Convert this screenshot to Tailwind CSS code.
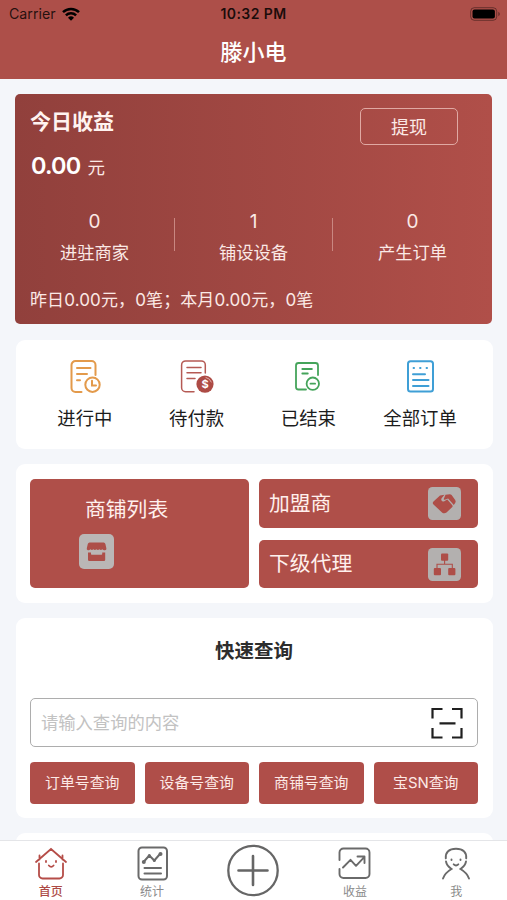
<!DOCTYPE html>
<html lang="zh-CN">
<head>
  <meta charset="UTF-8" />
  <meta name="viewport" content="width=device-width, initial-scale=1.0"/>
  <title>滕小电</title>
  <script src="https://cdn.jsdelivr.net/npm/@tailwindcss/browser@4"></script>
</head>
<body class="bg-[#f4f6fa] font-['Inter','Noto_Sans_CJK_SC',sans-serif] h-[900px] flex flex-col overflow-hidden">

  <!-- Header -->
  <header class="bg-[#ad4f49] h-[79px] shrink-0">
    <div class="h-7 pl-[9px] pr-[6px] grid grid-cols-3 items-center text-black">
      <div class="flex items-center gap-[6px]">
        <span class="text-[14.2px] leading-7 text-black/80">Carrier</span>
        <svg class="w-[18px] h-[14px]" viewBox="0 0 18 14" fill="none" stroke="#000" stroke-width="2.5">
          <path d="M1 5.2a11.5 11.5 0 0 1 16 0M3.9 8.3a7.3 7.3 0 0 1 10.2 0" />
          <path d="M9 13.7L6 10.7a4.3 4.3 0 0 1 6 0z" fill="#000" stroke="none" />
        </svg>
      </div>
      <span class="-ml-[3px] text-center text-[14px] font-semibold leading-7 tracking-[0.4px] whitespace-nowrap text-black/85">10:32 PM</span>
      <svg class="w-[31px] h-[14px] justify-self-end" viewBox="0 0 31 14">
        <rect x="0.7" y="0.7" width="26" height="12.6" rx="3.6" fill="none" stroke="#000" stroke-opacity=".4" />
        <rect x="2.5" y="2.5" width="22.4" height="9" rx="2" fill="#000" />
        <path d="M28.3 4.8v4.4q1.6-.7 1.6-2.2t-1.6-2.2z" fill="#000" fill-opacity=".4" />
      </svg>
    </div>
    <h1 class="text-center text-white text-[22px] font-medium leading-[48px]">滕小电</h1>
  </header>

  <main class="flex-1 min-h-0 overflow-hidden px-[15px] pt-[15px]">

    <!-- Income card -->
    <section class="h-[230px] w-[477px] rounded-[5px] bg-linear-to-r from-[#91403c] to-[#b04f49] px-[15px] text-[#fbe9e6] flex flex-col">
      <div class="flex justify-between h-[52px]">
        <h2 class="text-[21px] font-bold text-[#fff3f0] leading-[56px]">今日收益</h2>
        <button class="mt-[14px] mr-[19px] w-[98px] h-[37px] rounded-[5px] border border-[#e0a9a3] text-[18px] leading-[37px]">提现</button>
      </div>
      <p class="h-[56px] flex items-baseline gap-[7px] leading-[40px] pl-px"><span class="text-[23.5px] font-semibold text-white tracking-[-0.8px]">0.00</span><span class="text-[17.5px]">元</span></p>
      <div class="-mx-[15px] h-[64px] grid grid-cols-3 text-center mt-[3px]">
        <div class="flex flex-col">
          <span class="text-[19px] leading-[33px]">0</span>
          <span class="text-[17.3px] leading-[30px]">进驻商家</span>
        </div>
        <div class="flex flex-col relative">
          <i class="absolute left-0 top-[13px] h-[33px] w-px bg-[#c98781]"></i>
          <span class="text-[19px] leading-[33px]">1</span>
          <span class="text-[17.3px] leading-[30px]">铺设设备</span>
          <i class="absolute right-0 top-[13px] h-[33px] w-px bg-[#c98781]"></i>
        </div>
        <div class="flex flex-col">
          <span class="text-[19px] leading-[33px]">0</span>
          <span class="text-[17.3px] leading-[30px]">产生订单</span>
        </div>
      </div>
      <p class="mt-[16px] text-[17px] tracking-[0.12px] leading-[30px] whitespace-nowrap">昨日0.00元，0笔；本月0.00元，0笔</p>
    </section>

    <!-- Orders -->
    <section class="mt-[16px] ml-px w-[477px] h-[109px] rounded-[9px] bg-white grid grid-cols-4 pl-[13px] pr-[17px] text-[18.4px] text-[#1c1c1c] text-center">
      <div class="flex flex-col items-center pt-[18px]">
        <svg class="w-9 h-9" viewBox="0 0 36 36" fill="none" stroke="#e39a4b" stroke-width="2" stroke-linecap="round">
          <path d="M14.5 34H8.5a4 4 0 0 1-4-4V7a4 4 0 0 1 4-4h16a4 4 0 0 1 4 4v10M10 10h13.5M10 16h10M10 22.3h3" />
          <circle cx="25.5" cy="26.7" r="7.2" />
          <path d="M25 22.8v4.6h4" />
        </svg>
        <span class="leading-[48px]">进行中</span>
      </div>
      <div class="flex flex-col items-center pt-[18px]">
        <svg class="w-9 h-9" viewBox="0 0 36 36" fill="none" stroke="#b55a54" stroke-width="1.5" stroke-linecap="round">
          <path d="M15 33.7H6.6a4 4 0 0 1-4-4V6.9a4 4 0 0 1 4-4h15.7a4 4 0 0 1 4 4V15M8 9.5h14M8 14.8h14M8 20.5h8" />
          <circle cx="26" cy="26.1" r="8.6" fill="#ad4b45" stroke="none" />
          <path d="M27 19.5q4 .8 5.3 4.5" stroke="#e0aaa6" stroke-width="1" />
          <text x="26" y="30.2" text-anchor="middle" fill="#fff" stroke="none" font-size="11" font-weight="700">$</text>
        </svg>
        <span class="leading-[48px]">待付款</span>
      </div>
      <div class="flex flex-col items-center pt-[18px]">
        <svg class="w-9 h-9" viewBox="0 0 36 36" fill="none" stroke="#45a45b" stroke-width="1.8" stroke-linecap="round">
          <path d="M16 31.5H8.5A2.5 2.5 0 0 1 6 29V7.500A2.500 2.500 0 0 1 8.500 5h17A2.500 2.500 0 0 1 28 7.500V17M12.300 11h9.600M12.300 15.500h5.500" />
          <circle cx="22.8" cy="25.7" r="6.2" />
          <path d="M20.5 25.7h4.6" />
        </svg>
        <span class="leading-[48px]">已结束</span>
      </div>
      <div class="flex flex-col items-center pt-[18px]">
        <svg class="w-9 h-9" viewBox="0 0 36 36" fill="none" stroke="#3f9fd6" stroke-width="2" stroke-linecap="round">
          <rect x="6" y="3.2" width="25" height="30.3" rx="2.5" />
          <path d="M11 16.2h12M11 22h15.500M11 28h15.500" />
          <path d="M11.500 10h.6M18 10h.6M24.500 10h.6" stroke-width="1.800" />
        </svg>
        <span class="leading-[48px]">全部订单</span>
      </div>
    </section>

    <!-- Shops and agents -->
    <section class="mt-[15px] ml-px w-[477px] h-[139px] rounded-[9px] bg-white pl-[14px] pr-[15px] pt-[15px] flex gap-[10px] text-[20.8px] text-[#fff0ed]">
      <a class="w-[219px] h-[109px] rounded-[5px] bg-[#af4f49] block pt-[10px]">
        <p class="pl-[55px] leading-[42px]">商铺列表</p>
        <svg class="w-[35px] h-[35px] ml-[49px] mt-[3px]" viewBox="0 0 35 35">
          <rect width="35" height="35" rx="5" fill="#bab7b6" />
          <path d="M10.500 8.500h14.200q1.300 0 1.700 1.500l1 4.500q.2 1.500-1.400 1.800-1.700.3-2.600-1-1.500 1.500-3 0-1.500 1.500-3 0-1.500 1.500-3 0-1.500 1.500-3 0-1.100 1.300-2.500.9-1.500-.4-1.100-2l1-4.200q.4-1.500 1.700-1.500z" fill="#ad4f49" />
          <path d="M9 18.500h3v1.500q0 .7.700.7h9.800q.7 0 .7-.7v-1.500h3v7.300q0 1.200-1.200 1.200H10.200Q9 27 9 25.800z" fill="#ad4f49" />
        </svg>
      </a>
      <div class="flex-1 flex flex-col gap-[12px]">
        <a class="h-[49px] rounded-[5px] bg-[#af4f49] flex items-center justify-between pl-[10px] pr-[17px] leading-[49px]">
          加盟商
          <svg class="w-[33px] h-[33px]" viewBox="0 0 33 33">
            <rect width="33" height="33" rx="4.500" fill="#b3b0af" />
            <path d="M5.500 14.500l6.500-6 4.500-.7-2.900 3.400q-1 2 .7 3 1.500.8 3.200-.7l1.800-1 5 5.700q.8 1.500-.5 2.300l-5.300 5q-2 1.500-4.200.2l-8.800-8.200q-1.500-1.300 0-3z" fill="#ae4e48" />
            <path d="M17.500 7.800l4.300-.5q1 0 1.800.7l3.600 5q1 1.500 0 3l-1.400 2-5.700-6.500-3.300 1.300q-1.500.3-1-1z" fill="#ae4e48" />
          </svg>
        </a>
        <a class="h-[48px] rounded-[5px] bg-[#af4f49] flex items-center justify-between pl-[10px] pr-[17px] leading-[50px]">
          下级代理
          <svg class="w-[33px] h-[33px]" viewBox="0 0 33 33" fill="#ae4e48">
            <rect width="33" height="33" rx="4.500" fill="#b3b0af" />
            <rect x="13" y="5.500" width="7.200" height="7.200" rx="1" />
            <rect x="5.800" y="20" width="7.200" height="7.200" rx="1" />
            <rect x="20.200" y="20" width="7.200" height="7.200" rx="1" />
            <path d="M16.600 12v4.300M9 20v-3.700h15.300V20" fill="none" stroke="#ae4e48" stroke-width="1.100" />
          </svg>
        </a>
      </div>
    </section>

    <!-- Quick search -->
    <section class="mt-[15px] ml-px w-[477px] h-[200px] rounded-[9px] bg-white pl-[14px] pr-[15px]">
      <h2 class="text-center text-[19.5px] font-bold text-[#2d2d2d] leading-[67px] h-[80px]">快速查询</h2>
      <div class="h-[49px] rounded-[5px] border border-[#adadad] flex items-center justify-between pl-[10px] pr-[14px]">
        <span class="text-[17.3px] text-[#c2c2c2]">请输入查询的内容</span>
        <svg class="w-8 h-8" viewBox="0 0 32 32" fill="none" stroke="#1f1f1f" stroke-width="2.200">
          <path d="M1.500 11.500V2H11.500M21 2h9.500v9.500M30.500 21v9.500H21M11.500 30.500h-10V21M8.500 16.300h16" />
        </svg>
      </div>
      <div class="mt-[15px] grid grid-cols-4 gap-[10px] text-[14.9px] text-[#fde9e6] text-center">
        <button class="h-[42px] pt-px rounded-[4px] bg-[#af4e49]">订单号查询</button>
        <button class="h-[42px] pt-px rounded-[4px] bg-[#af4e49]">设备号查询</button>
        <button class="h-[42px] pt-px rounded-[4px] bg-[#af4e49]">商铺号查询</button>
        <button class="h-[42px] pt-px rounded-[4px] bg-[#af4e49]">宝SN查询</button>
      </div>
    </section>

    <section class="mt-[15px] ml-px w-[477px] h-10 rounded-[9px] bg-white"></section>
  </main>

  <!-- Tab bar -->
  <nav class="h-[60px] shrink-0 bg-white border-t border-[#e4e5e8] grid grid-cols-5 text-[12px] leading-[20px] text-[#8a8a8a] text-center">
    <a class="flex flex-col items-center pt-[5px] text-[#ad4a45] font-medium">
      <svg class="w-9 h-9" viewBox="0 0 36 36" fill="none" stroke="#b54d48" stroke-width="1.800" stroke-linecap="round">
        <path d="M3 16L18 3l15 13M6.500 13.500V9.500M29.500 13.500V9.500M6 17.500V29a3.500 3.500 0 0 0 3.500 3.500h17A3.500 3.500 0 0 0 30 29V17.500" />
        <path d="M13 15v1M23 15v1M15.800 19.500q2.400 2.600 4.800 0" />
      </svg>
      <span>首页</span>
    </a>
    <a class="flex flex-col items-center pt-[5px]">
      <svg class="w-9 h-9" viewBox="0 0 36 36" fill="none" stroke="#6a6a6a" stroke-width="2" stroke-linecap="round" stroke-linejoin="round">
        <rect x="4.500" y="1.500" width="28.500" height="32" rx="3.500" />
        <path d="M9.500 16l5.800-6.500 5 5L26 8M10.500 22H27M10.500 27.500H27" />
        <g fill="#6a6a6a" stroke="none">
          <circle cx="9.800" cy="16" r="2" />
          <circle cx="15.300" cy="9.500" r="1.500" />
          <circle cx="20.300" cy="14.500" r="1.500" />
          <circle cx="26.500" cy="8" r="2" />
        </g>
      </svg>
      <span>统计</span>
    </a>
    <a class="flex flex-col items-center pt-[3px]">
      <svg class="w-[54px] h-[54px]" viewBox="0 0 54 54" fill="none" stroke="#666" stroke-width="2.300" stroke-linecap="round">
        <circle cx="27" cy="26.500" r="24.700" />
        <path d="M27 12v29M12.500 26.500h29" stroke-width="2.600" />
      </svg>
    </a>
    <a class="flex flex-col items-center pt-[5px]">
      <svg class="w-9 h-9" viewBox="0 0 36 36" fill="none" stroke="#6a6a6a" stroke-width="1.900" stroke-linecap="round" stroke-linejoin="round">
        <path d="M2.500 14V6.500a4 4 0 0 1 4-4h22a4 4 0 0 1 4 4v21.500a4 4 0 0 1-4 4h-22a4 4 0 0 1-4-4V23" />
        <path d="M6 21.500l7.500-7.700 5.500 6 8.500-9M20.500 10.500h7V17" />
      </svg>
      <span>收益</span>
    </a>
    <a class="flex flex-col items-center pt-[5px]">
      <svg class="w-9 h-9" viewBox="0 0 36 36" fill="none" stroke="#6a6a6a" stroke-width="1.900" stroke-linecap="round">
        <path d="M7.800 12.300C7.300 6 11 2.800 18 2.800s10.700 3.200 10.200 9.500M8 15.500c.6 3.500 2.500 5.500 5.500 7.500-4.200 2.500-7 5-8.500 9.500M28 15.500c-.6 3.500-2.500 5.500-5.500 7.500 4.200 2.500 7 5 8.500 9.500" />
        <path d="M13.500 13.500v.6M22.500 13.500v.6M15.700 18.300q2.300 2.300 4.600 0" />
      </svg>
      <span>我</span>
    </a>
  </nav>

</body>
</html>
